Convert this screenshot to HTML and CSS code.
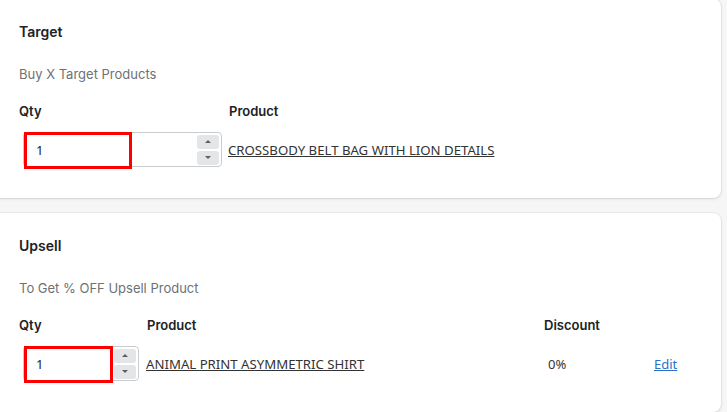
FILE: index.html
```html
<!DOCTYPE html>
<html>
<head>
<meta charset="utf-8">
<link rel="stylesheet" href="styles.css">
</head>
<body>
<div class="page">
  <section class="card first">
    <h2 class="title">Target</h2>
    <p class="sub">Buy X Target Products</p>
    <div class="grid g1">
      <div class="th">Qty</div>
      <div class="th">Product</div>
      <div class="cell">
        <div class="num wide">
          <span class="val">1</span>
          <span class="spin"><span class="btn"><span class="up"></span></span><span class="btn"><span class="down"></span></span></span>
          <span class="mark w1"></span>
        </div>
      </div>
      <div class="cell"><a class="plink" href="#">CROSSBODY BELT BAG WITH LION DETAILS</a></div>
    </div>
  </section>
  <section class="card">
    <h2 class="title">Upsell</h2>
    <p class="sub">To Get % OFF Upsell Product</p>
    <div class="grid g2">
      <div class="th">Qty</div>
      <div class="th">Product</div>
      <div class="th">Discount</div>
      <div class="th"></div>
      <div class="cell">
        <div class="num narrow">
          <span class="val">1</span>
          <span class="spin"><span class="btn"><span class="up"></span></span><span class="btn"><span class="down"></span></span></span>
          <span class="mark w2"></span>
        </div>
      </div>
      <div class="cell"><a class="plink" href="#">ANIMAL PRINT ASYMMETRIC SHIRT</a></div>
      <div class="cell"><span class="pct">0%</span></div>
      <div class="cell"><a class="edit" href="#">Edit</a></div>
    </div>
  </section>
</div>
</body>
</html>
```
FILE: styles.css
```css
html, body {
  margin: 0;
  padding: 0;
  background: #f6f6f7;
  overflow: hidden;
}
.page {
  display: flex;
  flex-direction: column;
  gap: 15px;
  margin-top: -1px;
  margin-left: -10px;
  width: 731px;
}
.card {
  background: #ffffff;
  border-radius: 8px;
  box-shadow: 0 0 0 1px rgba(63, 63, 68, 0.05), 0 1px 3px rgba(63, 63, 68, 0.15);
  padding: 23px 20px 31px 29px;
  font-family: Inter, "Liberation Sans", sans-serif;
  color: #202223;
}
.card.first {
  height: 145px;
}
.title {
  margin: 0;
  font-size: 14px;
  line-height: 20px;
  font-weight: 600;
}
.sub {
  margin: 22px 0 0;
  font-size: 13px;
  line-height: 20px;
  color: #6d7175;
}
.grid {
  display: grid;
  margin-top: 17px;
  row-gap: 11px;
  align-items: center;
}
.g1 { grid-template-columns: 210px 1fr; }
.g2 { grid-template-columns: 128px 397px 110px 1fr; }
.th {
  font-size: 13px;
  line-height: 20px;
  font-weight: 600;
}
.cell {
  display: flex;
  align-items: center;
  height: 35px;
}
.num {
  position: relative;
  box-sizing: border-box;
  margin-left: 4px;
  height: 35px;
  border: 1px solid #c9cccf;
  border-radius: 4px;
  background: #fff;
  display: flex;
  align-items: center;
  justify-content: space-between;
  padding: 0 2px 0 12px;
}
.num.wide { width: 199px; }
.num.narrow { width: 116px; }
.val {
  font-family: "Noto Sans", "Open Sans", sans-serif;
  font-size: 13px;
  color: #202223;
}
.spin {
  display: flex;
  flex-direction: column;
  gap: 2px;
}
.btn {
  width: 22px;
  height: 14px;
  border-radius: 3px;
  background: #e4e5e7;
  display: flex;
  align-items: center;
  justify-content: center;
}
.up {
  width: 0; height: 0;
  border-left: 3px solid transparent;
  border-right: 3px solid transparent;
  border-bottom: 3px solid #5c5f62;
}
.down {
  width: 0; height: 0;
  border-left: 3px solid transparent;
  border-right: 3px solid transparent;
  border-top: 3px solid #5c5f62;
}
.mark {
  position: absolute;
  left: 0;
  top: -1px;
  height: 37px;
  box-sizing: border-box;
  border: 3px solid #ff0000;
}
.mark.w1 { width: 108px; }
.mark.w2 { width: 89px; }
.plink {
  font-family: "Noto Sans", "Open Sans", sans-serif;
  font-size: 13.2px;
  color: #333333;
  text-decoration: underline;
  margin-left: -1px;
}
.pct {
  font-family: "Noto Sans", "Open Sans", sans-serif;
  font-size: 13px;
  color: #333333;
  margin-left: 4px;
}
.edit {
  font-family: "Noto Sans", "Open Sans", sans-serif;
  font-size: 13px;
  color: #2c6ecb;
  text-decoration: underline;
}
```
